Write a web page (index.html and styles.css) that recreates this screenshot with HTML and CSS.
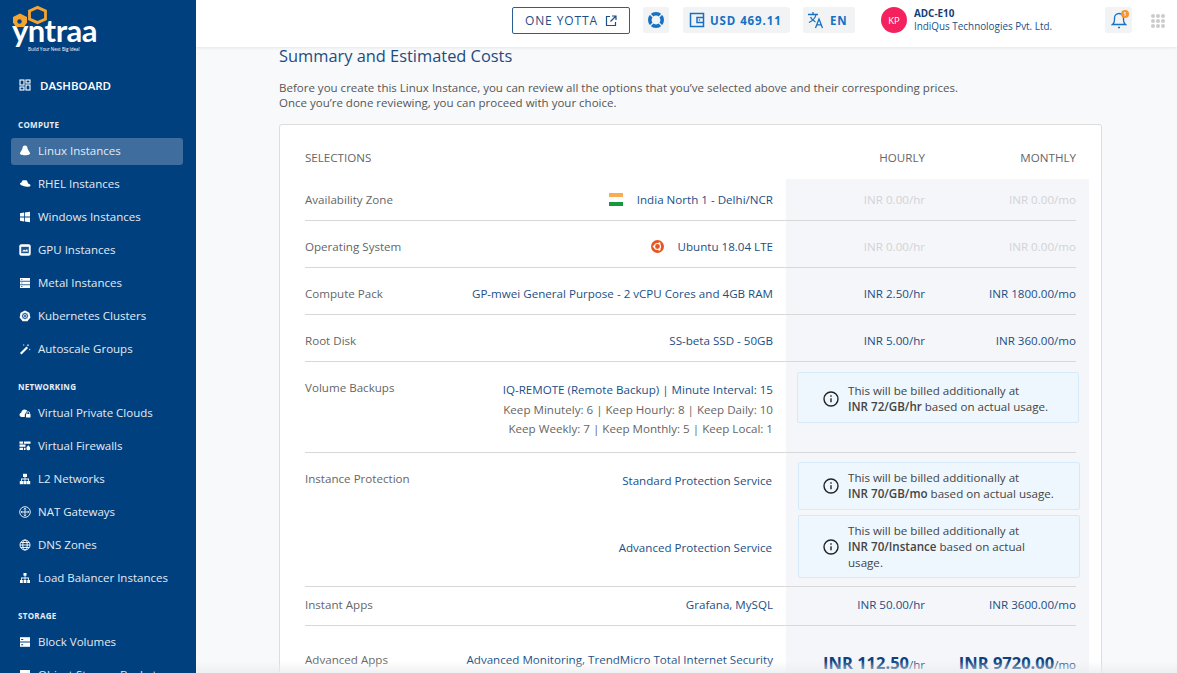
FILE: index.html
```html
<!DOCTYPE html>
<html>

<head>
    <title>Summary and Estimated Costs</title>
    <link rel="stylesheet" href="styles.css">
</head>

<body>
    <aside class="sidebar">
        <div class="logo">
            <svg class="logo-mark" width="44" height="28" viewBox="0 0 44 28">
                <path d="M21.500 6l8-3.600 8 3.600 0 8-8 3.600-8-3.600z" fill="none" stroke="#f5a432" stroke-width="2.800" />
                <path d="M5 12l7-3.500 7 3.500v5.500l-3 4.500H8l-3-4.500z" fill="#f5a432" />
                <circle cx="11.500" cy="16.500" r="2.200" fill="#01407e" />
            </svg>
            <div class="logo-name">yntraa</div>
            <div class="logo-tag">Build Your Next Big Idea!</div>
        </div>

        <a class="dash">
            <svg class="icon" viewBox="0 0 12 12" fill="none" stroke="#fff" stroke-width="1.100"><rect x="1" y="1" width="4" height="5" /><rect x="7" y="1" width="4" height="3" /><rect x="1" y="8" width="4" height="3" /><rect x="7" y="6" width="4" height="5" /></svg>
            DASHBOARD
        </a>

        <h4 class="nav-title">COMPUTE</h4>
        <a class="nav-item active">
            <svg class="icon" viewBox="0 0 12 12" fill="#fff"><path d="M6 .5c1.700 0 2.500 1.300 2.500 2.800 0 1 1.500 2.500 2.500 4.700.3.800-.3 1.200-1 1.500-1 .6-2.200.8-4 .8s-3-.2-4-.8c-.7-.3-1.300-.7-1-1.500 1-2.200 2.500-3.700 2.500-4.700C3.500 1.800 4.300.5 6 .5z" /></svg>
            Linux Instances
        </a>
        <a class="nav-item">
            <svg class="icon" viewBox="0 0 12 12" fill="#fff"><path d="M3.500 2.500C4.500 1.800 5.500 2.600 6.500 2.300c1.200-.4 1.800.5 2 1.700l.5 1.500c1 .4 2.500 1 2.500 2 0 1.200-2 1.500-4 1.200C4.500 8.300 1 7 1 5.700c0-.5.600-.8 1.200-.9z" /></svg>
            RHEL Instances
        </a>
        <a class="nav-item">
            <svg class="icon" viewBox="0 0 12 12" fill="#fff"><path d="M1 2.200l4-.6v4H1zM5.800 1.500L11 .7v4.900H5.800zM1 6.400h4v4l-4-.6zM5.800 6.400H11v4.900l-5.200-.8z" /></svg>
            Windows Instances
        </a>
        <a class="nav-item">
            <svg class="icon" viewBox="0 0 12 12"><rect x=".3" y=".3" width="11.400" height="11.400" rx="2" fill="#fff" /><rect x="2.200" y="2.800" width="7.600" height="6.400" fill="#1d5590" /><path d="M3 7.500l2-2 1.500 1L8 5l1 2.500z" fill="#fff" /></svg>
            GPU Instances
        </a>
        <a class="nav-item">
            <svg class="icon" viewBox="0 0 12 12" fill="#fff"><rect x="1" y="1" width="10" height="2.800" /><rect x="1" y="4.600" width="10" height="2.800" /><rect x="1" y="8.200" width="10" height="2.800" /><path d="M2 2h1.500v.6H2zM2 5.700h1.500v.6H2zM2 9.300h1.500v.6H2z" fill="#01407e" /></svg>
            Metal Instances
        </a>
        <a class="nav-item">
            <svg class="icon" viewBox="0 0 12 12"><path d="M6 .5l4.400 2.200 1 4.800-3 3.800H3.600l-3-3.800 1-4.800z" fill="#fff" /><circle cx="6" cy="6" r="2.600" fill="none" stroke="#1d5590" stroke-width=".9" /><path d="M6 2.500v7M2.600 6h6.800M3.600 3.600l4.800 4.800M8.400 3.600L3.600 8.400" stroke="#1d5590" stroke-width=".6" /></svg>
            Kubernetes Clusters
        </a>
        <a class="nav-item">
            <svg class="icon" viewBox="0 0 12 12" fill="#fff"><path d="M7.500 3.500l1.500 1.500-6.500 6.500L1 10z" /><path d="M9 .8l.4 1 1 .4-1 .4-.4 1-.4-1-1-.4 1-.4zM4.800 1l.3.700.7.300-.7.300-.3.700-.3-.7-.7-.3.700-.3zM10.700 5.500l.3.700.7.300-.7.300-.3.700-.3-.7-.7-.3.700-.3z" /></svg>
            Autoscale Groups
        </a>

        <h4 class="nav-title">NETWORKING</h4>
        <a class="nav-item">
            <svg class="icon" viewBox="0 0 12 12" fill="#fff"><path d="M2.800 10C1.300 10 .5 9 .5 7.800c0-1 .7-1.900 1.700-2.100C2.400 3.800 3.800 2.500 5.500 2.500c1.300 0 2.400.7 3 1.800-1.500.2-2 1.400-2 2.500-.5.200-.7.600-.7 1V10z" /><rect x="7" y="7" width="4.500" height="3.500" rx=".5" /><path d="M7.900 7V6a1.300 1.300 0 0 1 2.700 0v1" fill="none" stroke="#fff" stroke-width=".8" /></svg>
            Virtual Private Clouds
        </a>
        <a class="nav-item">
            <svg class="icon" viewBox="0 0 12 12" fill="#fff"><path d="M.5 1.500h3.600v2.200H.5zM5 1.500h6.500v2.200H5zM.5 4.600h6v2.200h-6zM.5 7.700h3.600v2.200H.5zM5 7.700h1.500v2.200H5z" /><path d="M9.300 5.300c1 1 1.900 1.900 1.900 3.100a1.900 1.900 0 0 1-3.800 0c0-1.200 1-2 1.900-3.100z" /></svg>
            Virtual Firewalls
        </a>
        <a class="nav-item">
            <svg class="icon" viewBox="0 0 12 12" fill="#fff"><rect x="4" y=".8" width="4" height="3.200" /><rect x=".8" y="8" width="3.200" height="3.200" /><rect x="4.400" y="8" width="3.200" height="3.200" /><rect x="8" y="8" width="3.200" height="3.200" /><path d="M5.600 4h.8v1.600h3.600V8h-.8V6.400H6.400V8h-.8V6.400H2.800V8H2V5.600h3.600z" /></svg>
            L2 Networks
        </a>
        <a class="nav-item">
            <svg class="icon" viewBox="0 0 12 12" fill="none" stroke="#fff" stroke-width=".9"><circle cx="6" cy="6" r="5.300" /><path d="M6 2.200v7.600M2.200 6h7.600M4.900 3.300L6 2.200l1.100 1.100M4.900 8.700L6 9.800l1.100-1.100M3.300 4.900L2.200 6l1.100 1.100M8.700 4.900L9.800 6 8.700 7.100" /></svg>
            NAT Gateways
        </a>
        <a class="nav-item">
            <svg class="icon" viewBox="0 0 12 12" fill="none" stroke="#fff" stroke-width=".9"><circle cx="6" cy="6" r="5" /><ellipse cx="6" cy="6" rx="2.200" ry="5" /><path d="M1 6h10M1.800 3.500h8.400M1.800 8.500h8.400" /></svg>
            DNS Zones
        </a>
        <a class="nav-item">
            <svg class="icon" viewBox="0 0 12 12" fill="#fff"><rect x="4.500" y="1" width="3" height="2.800" /><rect x="1" y="8" width="2.800" height="3" /><rect x="4.600" y="8" width="2.800" height="3" /><rect x="8.200" y="8" width="2.800" height="3" /><path d="M5.600 3.800h.8v1.800h3.600V8h-.8V6.400H6.400V8h-.8V6.400H2.800V8H2V5.600h3.600z" /></svg>
            Load Balancer Instances
        </a>

        <h4 class="nav-title">STORAGE</h4>
        <a class="nav-item">
            <svg class="icon" viewBox="0 0 12 12" fill="#fff"><rect x="1" y="1.200" width="10" height="4.300" /><rect x="1" y="6.500" width="10" height="4.300" /><path d="M2.200 2.900h2v1h-2zM2.200 8.200h2v1h-2z" fill="#01407e" /></svg>
            Block Volumes
        </a>
        <a class="nav-item">
            <svg class="icon" viewBox="0 0 12 12" fill="#fff"><rect x="1" y="1" width="10" height="10" /></svg>
            Object Storage Buckets
        </a>
    </aside>

    <div class="content">
        <header class="topbar">
            <a class="yotta">ONE YOTTA
                <svg width="12" height="12" viewBox="0 0 12 12" fill="none" stroke="#1c4f86" stroke-width="1.200"><path d="M5 1.500H1.500v9h9V7" /><path d="M7 1h4v4M11 1L5.500 6.500" /></svg>
            </a>
            <a class="tool tool-help">
                <svg width="18" height="18" viewBox="0 0 18 18"><circle cx="9" cy="9" r="6.200" fill="none" stroke="#1670c4" stroke-width="3.600" /><path d="M3 3l3.500 3.500M15 3l-3.500 3.500M3 15l3.500-3.500M15 15l-3.500-3.500" stroke="#f1f3f4" stroke-width="1.300" /></svg>
            </a>
            <a class="tool tool-wallet">
                <svg width="16" height="16" viewBox="0 0 16 16" fill="none" stroke="#1670c4" stroke-width="1.500"><path d="M14.500 1.500h-13v13h13z" /><path d="M14.500 5.500H8v5h6.500" /><circle cx="10.500" cy="8" r=".7" fill="#1670c4" stroke="none" /></svg>
                USD 469.11
            </a>
            <a class="tool tool-lang">
                <svg width="18" height="18" viewBox="0 0 18 18" fill="none" stroke="#1670c4" stroke-width="1.300"><path d="M1 3.500h10M6 1v2.500M9 3.500c-.5 3-3 6-7 8M3.500 6c1 2.300 3 4 5 5" /><path d="M8.500 17l3.500-9 3.500 9M10 13.800h4" /></svg>
                EN
            </a>
            <div class="account">
                <span class="avatar">KP</span>
                <div class="account-text">
                    <b>ADC-E10</b>
                    <span>IndiQus Technologies Pvt. Ltd.</span>
                </div>
            </div>
            <a class="tool tool-bell">
                <svg width="16" height="18" viewBox="0 0 16 18" fill="none" stroke="#1670c4" stroke-width="1.300"><path d="M1.500 13.500c1.500-1 2-2.500 2-4.500V7a4.500 4.500 0 0 1 9 0v2c0 2 .5 3.500 2 4.500z" /><path d="M7 16.500h2" stroke-width="1.400" /></svg>
                <span class="badge">1</span>
            </a>
            <div class="apps">
                <i></i><i></i><i></i><i></i><i></i><i></i><i></i><i></i><i></i>
            </div>
        </header>

        <main class="main">
            <h2 class="title">Summary and Estimated Costs</h2>
            <p class="intro">Before you create this Linux Instance, you can review all the options that you’ve selected above and their corresponding prices.<br>Once you’re done reviewing, you can proceed with your choice.</p>

            <section class="card">
                <div class="head-row">
                    <span>SELECTIONS</span>
                    <span></span>
                    <span class="price">HOURLY</span>
                    <span class="price">MONTHLY</span>
                </div>

                <div class="summary">
                    <div class="row row-first">
                        <span class="label">Availability Zone</span>
                        <span class="value with-icon">
                            <span class="flag"><i></i><i></i><i></i></span>
                            India North 1 - Delhi/NCR
                        </span>
                        <span class="price faint">INR 0.00/hr</span>
                        <span class="price faint">INR 0.00/mo</span>
                    </div>
                    <div class="row">
                        <span class="label">Operating System</span>
                        <span class="value with-icon">
                            <svg width="13" height="13" viewBox="0 0 13 13"><circle cx="6.500" cy="6.500" r="6.500" fill="#e95420" /><circle cx="6.500" cy="6.500" r="3" fill="none" stroke="#fff" stroke-width="1.200" /><circle cx="2.800" cy="6.500" r="1.100" fill="#fff" /><circle cx="8.400" cy="3.300" r="1.100" fill="#fff" /><circle cx="8.400" cy="9.700" r="1.100" fill="#fff" /></svg>
                            Ubuntu 18.04 LTE
                        </span>
                        <span class="price faint">INR 0.00/hr</span>
                        <span class="price faint">INR 0.00/mo</span>
                    </div>
                    <div class="row">
                        <span class="label">Compute Pack</span>
                        <span class="value">GP-mwei General Purpose - 2 vCPU Cores and 4GB RAM</span>
                        <span class="price">INR 2.50/hr</span>
                        <span class="price">INR 1800.00/mo</span>
                    </div>
                    <div class="row">
                        <span class="label">Root Disk</span>
                        <span class="value">SS-beta SSD - 50GB</span>
                        <span class="price">INR 5.00/hr</span>
                        <span class="price">INR 360.00/mo</span>
                    </div>
                    <div class="row row-backups">
                        <span class="label">Volume Backups</span>
                        <div class="value-stack">
                            <span class="value">IQ-REMOTE (Remote Backup) | Minute Interval: 15</span>
                            <span>Keep Minutely: 6 | Keep Hourly: 8 | Keep Daily: 10</span>
                            <span>Keep Weekly: 7 | Keep Monthly: 5 | Keep Local: 1</span>
                        </div>
                        <div class="notice notice-backup">
                            <svg class="info" viewBox="0 0 16 16" fill="none" stroke="#222" stroke-width="1.400"><circle cx="8" cy="8" r="7" /><path d="M8 7.200v4" /><path d="M8 4.300v1.400" /></svg>
                            <p>This will be billed additionally at<br><b>INR 72/GB/hr</b> based on actual usage.</p>
                        </div>
                    </div>
                    <div class="row row-protection">
                        <span class="label">Instance Protection</span>
                        <span class="value value-standard">Standard Protection Service</span>
                        <div class="notice notice-standard">
                            <svg class="info" viewBox="0 0 16 16" fill="none" stroke="#222" stroke-width="1.400"><circle cx="8" cy="8" r="7" /><path d="M8 7.200v4" /><path d="M8 4.300v1.400" /></svg>
                            <p>This will be billed additionally at<br><b>INR 70/GB/mo</b> based on actual usage.</p>
                        </div>
                        <span class="value value-advanced">Advanced Protection Service</span>
                        <div class="notice notice-advanced">
                            <svg class="info" viewBox="0 0 16 16" fill="none" stroke="#222" stroke-width="1.400"><circle cx="8" cy="8" r="7" /><path d="M8 7.200v4" /><path d="M8 4.300v1.400" /></svg>
                            <p>This will be billed additionally at<br><b>INR 70/Instance</b> based on actual<br>usage.</p>
                        </div>
                    </div>
                    <div class="row row-apps">
                        <span class="label">Instant Apps</span>
                        <span class="value">Grafana, MySQL</span>
                        <span class="price">INR 50.00/hr</span>
                        <span class="price">INR 3600.00/mo</span>
                    </div>
                    <div class="row row-total">
                        <span class="label">Advanced Apps</span>
                        <span class="value">Advanced Monitoring, TrendMicro Total Internet Security</span>
                        <span class="price"><b>INR 112.50</b>/hr</span>
                        <span class="price"><b>INR 9720.00</b>/mo</span>
                    </div>
                </div>
            </section>
        </main>
        <div class="fade"></div>
    </div>
</body>

</html>
```
FILE: styles.css
```css
* {
    box-sizing: border-box;
}

html,
body {
    height: 100%;
}

body {
    margin: 0;
    display: flex;
    overflow: hidden;
    font-family: "Open Sans", sans-serif;
    font-size: 11.600px;
    background-color: #f8f9fb;
    color: #555;
}

/* sidebar */
.sidebar {
    width: 196px;
    height: 673px;
    flex-shrink: 0;
    overflow: hidden;
    background-color: #01407e;
    color: #e3ebf3;
}

.logo {
    position: relative;
    height: 73px;
    padding: 15px 0 0 12px;
    color: #fff;
}

.logo-mark {
    position: absolute;
    left: 8px;
    top: 5px;
}

.logo-name {
    font-family: Lato, sans-serif;
    font-weight: 700;
    font-size: 31px;
    line-height: 30px;
    letter-spacing: -0.5px;
}

.logo-tag {
    margin: 1px 0 0 16px;
    font-size: 4.500px;
    line-height: 6px;
    white-space: nowrap;
}

.dash {
    display: flex;
    align-items: center;
    gap: 9px;
    height: 24px;
    margin-bottom: 10px;
    padding-left: 19px;
    color: #fff;
    font-weight: 600;
    font-size: 11.500px;
}

.icon {
    width: 12px;
    height: 12px;
    flex-shrink: 0;
}

.nav-title {
    margin: 0;
    height: 31px;
    padding: 12px 0 0 18px;
    line-height: 12px;
    color: #e8eef5;
    font-size: 8px;
    font-weight: 700;
    letter-spacing: 0.3px;
}

.nav-item {
    display: flex;
    align-items: center;
    gap: 7px;
    height: 27px;
    margin: 0 13px 6px 11px;
    padding: 0 0 2px 8px;
    border-radius: 3px;
    font-size: 11.500px;
    white-space: nowrap;
}

.nav-item.active {
    background-color: #3e6d9e;
}

/* top bar */
.content {
    position: relative;
    flex: 1;
    min-width: 0;
    height: 673px;
    overflow: hidden;
}

.topbar {
    position: relative;
    z-index: 1;
    display: flex;
    align-items: flex-start;
    height: 47px;
    padding: 7px 0 0 316px;
    background-color: #fff;
    box-shadow: 0 1px 3px rgba(0, 0, 0, 0.08);
}

.yotta {
    display: flex;
    align-items: center;
    justify-content: center;
    gap: 7px;
    width: 118px;
    height: 27px;
    border: 1px solid #2a5f93;
    border-radius: 2px;
    color: #1c4f86;
    font-size: 12px;
    letter-spacing: 0.9px;
}

.tool {
    display: flex;
    align-items: center;
    height: 26px;
    border-radius: 3px;
    background-color: #f1f3f4;
    color: #1670c4;
    font-weight: 700;
    font-size: 11.500px;
    letter-spacing: 0.9px;
}

.tool-help {
    justify-content: center;
    width: 26px;
    margin-left: 13px;
}

.tool-wallet {
    width: 107px;
    margin-left: 14px;
    padding-left: 6px;
    gap: 5px;
}

.tool-lang {
    width: 52px;
    margin-left: 13px;
    padding-left: 4px;
    gap: 5px;
}

.account {
    display: flex;
    align-items: center;
    gap: 7px;
    width: 224px;
    margin-left: 26px;
}

.avatar {
    display: flex;
    align-items: center;
    justify-content: center;
    width: 26px;
    height: 26px;
    border-radius: 50%;
    background-color: #f5215f;
    color: #fff;
    font-size: 9.500px;
}

.account-text {
    display: flex;
    flex-direction: column;
    color: #1c4f86;
    font-size: 9.900px;
    line-height: 13px;
    white-space: nowrap;
}

.account-text b {
    color: #0f3f78;
}

.tool-bell {
    position: relative;
    justify-content: center;
    width: 27px;
}

.badge {
    position: absolute;
    top: 3px;
    right: 3px;
    width: 8px;
    height: 8px;
    border-radius: 50%;
    background-color: #f5962a;
    color: #fff;
    font-size: 5px;
    line-height: 8px;
    letter-spacing: 0;
    text-align: center;
}

.apps {
    display: grid;
    grid-template-columns: repeat(3, 4px);
    grid-auto-rows: 4px;
    gap: 1px;
    margin: 7px 0 0 19px;
}

.apps i {
    border-radius: 50%;
    background-color: #ccc;
}

/* summary */
.main {
    padding-left: 83px;
}

.title {
    margin: 0;
    height: 33px;
    line-height: 18px;
    color: #1d4d80;
    font-size: 16.400px;
    font-weight: 400;
}

.intro {
    margin: 0;
    height: 44px;
    line-height: 15px;
    color: #555;
    font-size: 11.520px;
}

.card {
    width: 823px;
    height: 600px;
    padding: 0 0 0 25px;
    background-color: #fff;
    border: 1px solid #ddd;
    border-radius: 3px;
}

.head-row,
.row {
    display: grid;
    grid-template-columns: 140px 341px 139px 151px;
}

.head-row {
    width: 771px;
    height: 54px;
    padding-top: 26px;
    line-height: 14px;
    color: #666;
}

.summary {
    width: 784px;
    padding-right: 13px;
    background: linear-gradient(to right, transparent 481px, #f5f6f9 481px);
}

.row {
    min-height: 47px;
    padding-top: 4px;
    align-items: center;
    border-bottom: 1px solid #d8d8d8;
}

.row-first {
    min-height: 42px;
    padding-top: 0;
}

.label {
    color: #666;
}

.value {
    padding-right: 13px;
    text-align: right;
    color: #1c4f86;
    white-space: nowrap;
}

.with-icon {
    display: flex;
    justify-content: flex-end;
    align-items: center;
    gap: 14px;
}

.flag {
    display: flex;
    flex-direction: column;
    width: 14px;
    height: 13px;
}

.flag i {
    flex: 1;
    background-color: #fff;
}

.flag i:first-child {
    background-color: #fbac52;
}

.flag i:last-child {
    background-color: #149a3c;
}

.price {
    text-align: right;
    color: #1c4f86;
    white-space: nowrap;
}

.head-row .price {
    color: #666;
}

.faint {
    color: #d2d3d6;
}

.row-backups {
    height: 91px;
    padding-top: 0;
    align-items: start;
}

.row-backups .label {
    padding-top: 18px;
}

.value-stack {
    display: flex;
    flex-direction: column;
    align-items: flex-end;
    padding: 18px 13px 0 0;
    line-height: 19.500px;
    color: #666;
    white-space: nowrap;
}

.value-stack .value {
    padding-right: 0;
}

.notice {
    grid-column: 3 / span 2;
    display: flex;
    align-items: center;
    gap: 9px;
    margin: 0 -3px 0 11px;
    padding-left: 25px;
    border: 1px solid #d5ebfb;
    border-radius: 2px;
    background-color: #eef7fe;
    color: #444;
    font-size: 11.600px;
    line-height: 16px;
    white-space: nowrap;
}

.notice p {
    margin: 0;
}

.notice b {
    font-weight: 600;
}

.info {
    width: 16px;
    height: 16px;
    flex-shrink: 0;
}

.notice-backup {
    height: 51px;
    margin-top: 10px;
    padding-top: 2px;
}

.row-protection {
    height: 134px;
    padding-top: 0;
    grid-template-rows: 57px 68px;
    align-items: start;
}

.row-protection .label {
    grid-row: 1 / span 2;
    padding-top: 18px;
}

.value-standard {
    padding: 20px 14px 0 0;
}

.value-advanced {
    grid-column: 2;
    padding: 30px 14px 0 0;
}

.notice-standard {
    height: 48px;
    margin: 9px -4px 0 12px;
    padding-left: 24px;
}

.notice-advanced {
    height: 63px;
    margin: 5px -4px 0 12px;
    padding-left: 24px;
}

.row-apps {
    min-height: 39px;
    padding: 0 0 3px;
}

.row-total {
    min-height: 66px;
    padding-top: 0;
    border-bottom: 0;
}

.row-total .price {
    padding-top: 6px;
    color: #1c4f86;
    font-size: 11.500px;
}

.row-total b {
    color: #0e4180;
    font-size: 16.500px;
    font-weight: 700;
}

.fade {
    position: absolute;
    left: 0;
    right: 0;
    bottom: 0;
    height: 12px;
    background: linear-gradient(to bottom, rgba(235, 236, 238, 0), rgba(235, 236, 238, 0.75));
}
```
